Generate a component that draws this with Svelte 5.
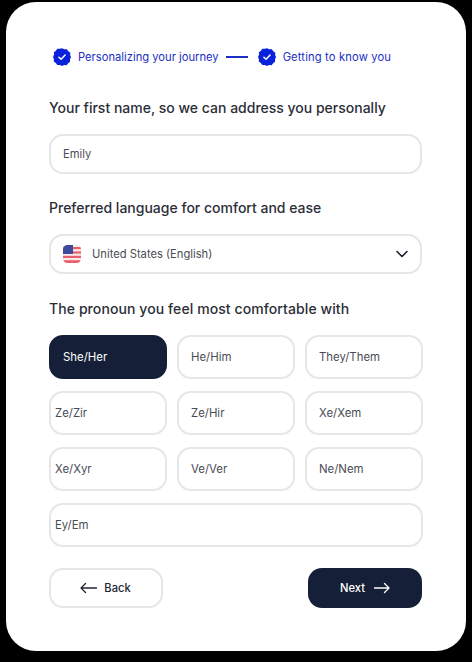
<script>
  const pronouns = [
    { label: 'She/Her', active: true },
    { label: 'He/Him' },
    { label: 'They/Them' },
    { label: 'Ze/Zir', tight: true },
    { label: 'Ze/Hir' },
    { label: 'Xe/Xem' },
    { label: 'Xe/Xyr', tight: true },
    { label: 'Ve/Ver' },
    { label: 'Ne/Nem' },
    { label: 'Ey/Em', tight: true, wide: true }
  ];
</script>

{#snippet badge()}
  <svg class="badge" width="18" height="18" viewBox="0 0 18 18">
    <path d="M9 0.2l2.3 1.1 2.5-.1 1.5 2 2 1.5-.1 2.5L18 9l-1 2.2.1 2.5-2 1.5-1.5 2-2.5-.1L9 18l-2.2-1-2.5.1-1.5-2-2-1.5.1-2.5L0 9l1-2.3-.1-2.5 2-1.5 1.5-2 2.5.1z" fill="#0a22dc"/>
    <path d="M5.9 9.2l2.2 2.1 4-4.2" fill="none" stroke="#fff" stroke-width="1.5" stroke-linecap="round" stroke-linejoin="round"/>
  </svg>
{/snippet}

<div class="card">
  <div class="steps">
    {@render badge()}
    <span class="step">Personalizing your journey</span>
    <span class="line"></span>
    {@render badge()}
    <span class="step last">Getting to know you</span>
  </div>

  <h2 class="first">Your first name, so we can address you personally</h2>
  <div class="field">Emily</div>

  <h2>Preferred language for comfort and ease</h2>
  <div class="field select">
    <svg class="flag" width="18" height="18" viewBox="0 0 18 18">
      <defs><clipPath id="flagclip"><rect width="18" height="18" rx="4.5"/></clipPath></defs>
      <g clip-path="url(#flagclip)">
        <rect width="18" height="18" fill="#fbe9ea"/>
        <rect y="2" width="18" height="2.2" fill="#e8606c"/>
        <rect y="6.4" width="18" height="2.2" fill="#e8606c"/>
        <rect y="10.8" width="18" height="2.2" fill="#e8606c"/>
        <rect y="15.2" width="18" height="2.8" fill="#e8606c"/>
        <rect width="10" height="9" fill="#3f4a9c"/>
      </g>
    </svg>
    <span class="value">United States (English)</span>
    <svg class="chevron" width="12" height="8" viewBox="0 0 12 8">
      <path d="M1 1.5L6 6.5l5-5" fill="none" stroke="#1a1f2e" stroke-width="1.6" stroke-linecap="round" stroke-linejoin="round"/>
    </svg>
  </div>

  <h2 class="third">The pronoun you feel most comfortable with</h2>
  <div class="pronouns">
    {#each pronouns as p}
      <div class="pill" class:active={p.active} class:tight={p.tight} class:wide={p.wide}>{p.label}</div>
    {/each}
  </div>

  <div class="actions">
    <div class="btn back">
      <svg width="17" height="12" viewBox="0 0 17 12">
        <path d="M16.5 6H1M5.5 1.5L1 6l4.500 4.500" fill="none" stroke="#23262f" stroke-width="1.3" stroke-linecap="round" stroke-linejoin="round"/>
      </svg>
      Back
    </div>
    <div class="btn next">
      Next
      <svg width="16" height="12" viewBox="0 0 16 12">
        <path d="M.5 6H15M10.500 1.500L15 6l-4.500 4.500" fill="none" stroke="#fff" stroke-width="1.3" stroke-linecap="round" stroke-linejoin="round"/>
      </svg>
    </div>
  </div>
</div>

<style>
  :global(body) {
    background: #000;
    font-family: "Inter", "Liberation Sans", sans-serif;
  }

  .card {
    box-sizing: border-box;
    width: 460px;
    height: 649px;
    margin: 2px 0 11px 6px;
    padding: 45px 43px 0;
    background: #fff;
    border-radius: 30px;
    color: #23262f;
  }

  .steps {
    display: flex;
    align-items: center;
    height: 20px;
    margin-left: 4px;
    color: #1a2fc4;
    font-size: 11.2px;
    white-space: nowrap;
  }

  .badge { flex: none; }
  .step { margin-left: 7px; }
  .step.last { letter-spacing: 0.15px; }

  .line {
    width: 22px;
    height: 2px;
    margin: 0 10px 0 7px;
    background: #1a2fc4;
  }

  h2 {
    margin: 24px 0 16px;
    font-size: 14px;
    line-height: 20px;
    font-weight: 500;
    color: #2b2e37;
    white-space: nowrap;
  }

  h2.first { margin-top: 31px; }
  h2.third { margin-top: 25px; letter-spacing: 0.09px; }

  .field {
    box-sizing: border-box;
    display: flex;
    align-items: center;
    width: 373px;
    height: 40px;
    padding: 0 12px;
    border: 2px solid #e5e6e8;
    border-radius: 14px;
    font-size: 11.2px;
    color: #4a4d55;
  }

  .value { margin-left: 11px; }
  .chevron { margin-left: auto; }

  .pronouns {
    display: grid;
    grid-template-columns: repeat(3, 118px);
    grid-auto-rows: 44px;
    gap: 12px 10px;
    width: 374px;
  }

  .pill {
    box-sizing: border-box;
    display: flex;
    align-items: center;
    padding-left: 12px;
    border: 2px solid #e5e6e8;
    border-radius: 14px;
    font-size: 11.4px;
    color: #4a4d55;
  }

  .pill.tight { padding-left: 4px; }
  .pill.wide { grid-column: 1 / -1; }

  .pill.active {
    background: #161f38;
    border-color: #161f38;
    color: #fff;
  }

  .actions {
    display: flex;
    justify-content: space-between;
    width: 373px;
    margin-top: 21px;
  }

  .btn {
    box-sizing: border-box;
    display: flex;
    align-items: center;
    justify-content: center;
    width: 114px;
    height: 40px;
    border-radius: 14px;
    font-size: 11.2px;
    font-weight: 550;
  }

  .back {
    gap: 7px;
    padding-right: 1px;
    border: 2px solid #e5e6e8;
    color: #23262f;
  }

  .next {
    gap: 9px;
    background: #161f38;
    color: #fff;
  }
</style>
